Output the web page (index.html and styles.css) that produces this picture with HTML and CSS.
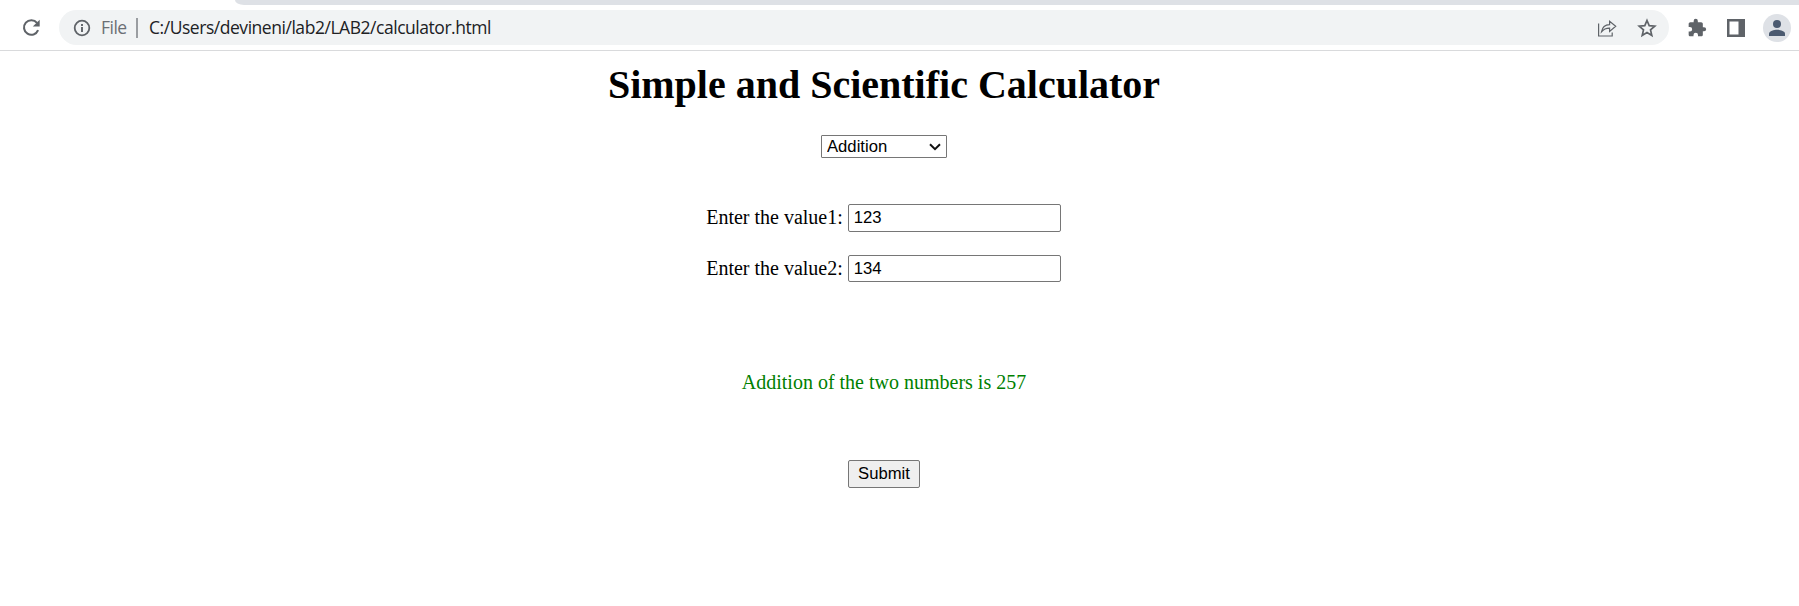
FILE: index.html
```html
<!DOCTYPE html>
<html lang="en">
<head>
<meta charset="utf-8">
<title>Calculator</title>
<link rel="stylesheet" href="styles.css">
</head>
<body>
<div class="tabstrip"><div class="tabstrip-fill"></div></div>
<header class="toolbar">
  <svg class="reload" width="22" height="22" viewBox="0 0 22 22"><path d="M17 5.9A7.3 7.3 0 1 0 18.1 13.2" fill="none" stroke="#5f6368" stroke-width="2.1"/><path d="M19.7 2.7V9.6H12.8Z" fill="#5f6368"/></svg>
  <div class="omnibox">
    <svg class="info" width="18" height="18" viewBox="0 0 18 18"><circle cx="9" cy="9" r="7.3" fill="none" stroke="#5f6368" stroke-width="1.8"/><path d="M9 8v5M9 5v2" stroke="#5f6368" stroke-width="1.9"/></svg>
    <span class="scheme">File</span>
    <span class="divider"></span>
    <span class="url">C:/Users/devineni/lab2/LAB2/calculator.html</span>
    <svg class="share" width="20" height="20" viewBox="0 0 20 20" fill="none" stroke="#5f6368" stroke-width="1.2"><path d="M1.6 5.5V18H15.2V14.5"/><path d="M4.5 13.8C5.3 9 8.3 6.8 12.6 6.6V3.2L18.7 8.3L12.6 13.5V10.2C9.3 10.1 6.7 11.2 4.5 13.8Z"/></svg>
    <svg class="star" width="20" height="20" viewBox="0 0 20 20"><path d="M10 2.5L12.2 7.7L17.8 8.2L13.5 11.9L14.8 17.4L10 14.5L5.2 17.4L6.5 11.9L2.2 8.2L7.8 7.7Z" fill="none" stroke="#5f6368" stroke-width="1.7"/></svg>
  </div>
  <svg class="puzzle" width="20" height="20" viewBox="0 0 24 24"><path fill="#5f6368" d="M20.5 11H19V7c0-1.100-.9-2-2-2h-4V3.500a2.500 2.500 0 0 0-5 0V5H4c-1.100 0-2 .9-2 2v3.800h1.500a2.700 2.700 0 0 1 0 5.400H2V20c0 1.100.9 2 2 2h3.800v-1.500a2.700 2.700 0 0 1 5.400 0V22H17c1.100 0 2-.9 2-2v-4h1.500a2.500 2.500 0 0 0 0-5z"/></svg>
  <svg class="panel" width="18" height="18" viewBox="0 0 18 18"><path fill="#5f6368" fill-rule="evenodd" d="M0 0H18V18H0ZM2.500 2.500V15.500H11.500V2.500Z"/></svg>
  <div class="avatar"><svg width="16" height="16" viewBox="0 0 16 16" fill="#4b5a70"><circle cx="8" cy="4" r="4"/><path d="M0 16V13.700C0 11 5.300 9.700 8 9.700S16 11 16 13.700V16Z"/></svg></div>
</header>
<main class="page">
  <h1 class="title">Simple and Scientific Calculator</h1>
  <div class="select-wrap">
    <select class="operation"><option>Addition</option></select>
    <svg class="chevron" width="12" height="8" viewBox="0 0 12 8"><path d="M1 1.300L6 6.200L11 1.300" fill="none" stroke="#111" stroke-width="2"/></svg>
  </div>
  <div class="row row-first"><label for="v1">Enter the value1:</label><input class="field field-tall" id="v1" value="123"></div>
  <div class="row row-second"><label for="v2">Enter the value2:</label><input class="field" id="v2" value="134"></div>
  <p class="result">Addition of the two numbers is 257</p>
  <button class="submit">Submit</button>
</main>
</body>
</html>
```
FILE: styles.css
```css
* { box-sizing: border-box; }
body { margin: 0; background: #fff; color: #000; font: 20px/23px "Liberation Serif", serif; overflow: hidden; }
.tabstrip { height: 5px; padding-left: 235px; }
.tabstrip-fill { height: 5px; background: #dee1e6; border-bottom-left-radius: 9px 5px; }
.toolbar { display: flex; align-items: center; height: 46px; padding: 0 7px 0 20px; border-bottom: 1px solid #d9dadc; }
.reload { margin-right: 17px; }
.omnibox { display: flex; align-items: center; width: 1610px; height: 35px; padding: 0 12px 0 14px; border-radius: 18px; background: #f1f3f4; font: 17.5px/24px "Open Sans", sans-serif; }
.scheme { width: 27px; margin-left: 10px; padding-bottom: 1px; color: #6b6f74; white-space: nowrap; letter-spacing: -0.5px; }
.divider { width: 2px; height: 20px; margin: 0 11px 0 8px; background: #9a9da1; }
.url { padding-bottom: 1px; color: #202124; white-space: nowrap; letter-spacing: -0.46px; }
.share { margin-left: auto; }
.star { margin-left: 20px; }
.puzzle { margin-left: 18px; }
.panel { margin-left: 20px; }
.avatar { display: flex; align-items: center; justify-content: center; width: 28px; height: 28px; margin-left: 18px; border-radius: 50%; background: #dee1e6; }
.page { display: flex; flex-direction: column; align-items: center; width: 1768px; padding-top: 11px; }
.title { margin: 0; font-size: 40px; line-height: 46px; font-weight: bold; }
.select-wrap { display: flex; align-items: center; width: 126px; height: 23px; margin-top: 27px; border: 1px solid #767676; border-radius: 1px; }
.operation { flex: 1; min-width: 0; height: 21px; padding: 0 0 0 5px; border: 0; appearance: none; background: transparent; color: #000; font: 16.67px/19px "Liberation Sans", Arial, sans-serif; }
.chevron { margin-right: 5px; }
.row { display: flex; align-items: center; gap: 5px; margin-right: 1px; }
.row-first { margin-top: 46px; }
.row-first label { padding-bottom: 2px; }
.row-second { margin-top: 23px; }
.field { width: 213px; height: 27px; padding: 1px 5px; border: 1px solid #767676; border-radius: 2px; color: #000; background: #fff; font: 16.67px/19px "Liberation Sans", Arial, sans-serif; }
.field-tall { height: 28px; }
.result { margin: 89px 0 0; color: #008000; }
.submit { width: 72px; height: 28px; margin-top: 66px; padding: 0 0 2px; border: 1px solid #767676; border-radius: 2px; background: #efefef; color: #000; font: 16.67px/19px "Liberation Sans", Arial, sans-serif; }
```
